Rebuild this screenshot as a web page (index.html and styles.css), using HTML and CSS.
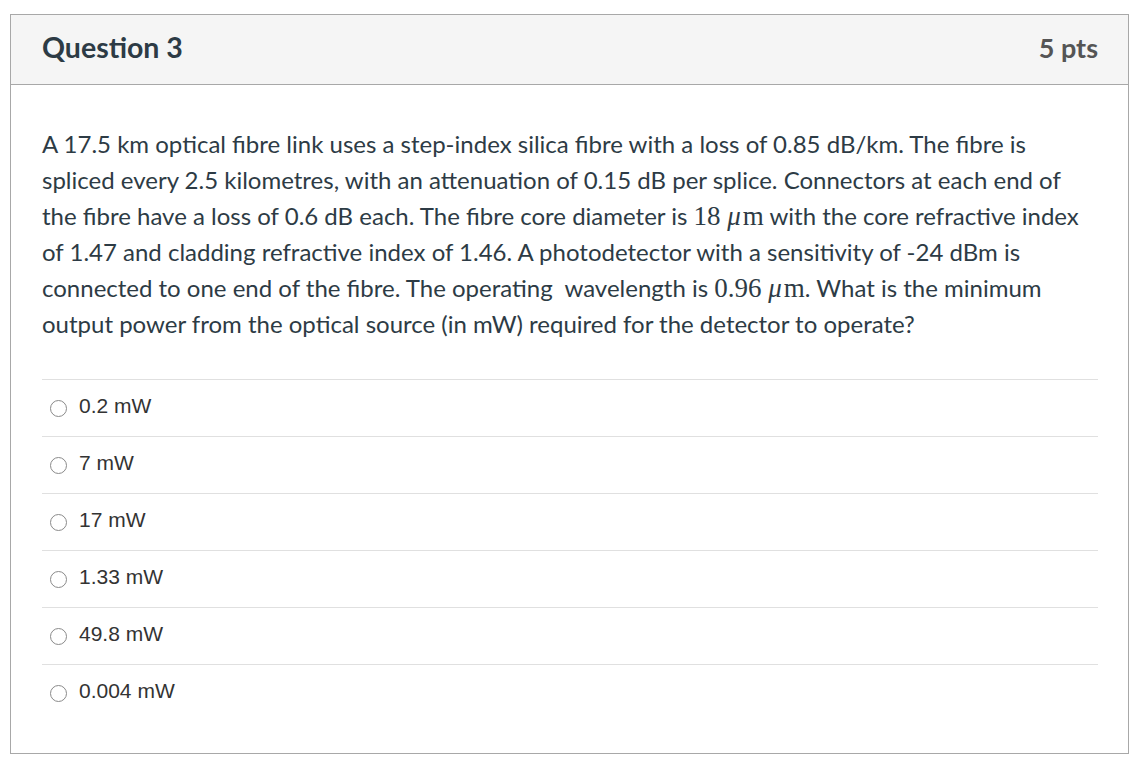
FILE: index.html
```html
<!DOCTYPE html>
<html>
<head>
<meta charset="utf-8">
<link rel="stylesheet" href="styles.css">
</head>
<body>
<div class="question">
  <div class="header">
    <h2 class="title">Question 3</h2>
    <div class="pts">5 pts</div>
  </div>
  <div class="content">
    <p class="text">A 17.5 km optical fibre link uses a step-index silica fibre with a loss of 0.85 dB/km. The fibre is spliced every 2.5 kilometres, with an attenuation of 0.15 dB per splice. Connectors at each end of the fibre have a loss of 0.6 dB each. The fibre core diameter is <span class="math">18&nbsp;<i>μ</i>m</span> with the core refractive index of 1.47 and cladding refractive index of 1.46. A photodetector with a sensitivity of -24 dBm is connected to one end of the fibre. The operating&nbsp; wavelength is <span class="math">0.96&nbsp;<i>μ</i>m</span>. What is the minimum output power from the optical source (in mW) required for the detector to operate?</p>
    <div class="answers">
      <div class="answer"><span class="radio"></span><span class="label">0.2 mW</span></div>
      <div class="answer"><span class="radio"></span><span class="label">7 mW</span></div>
      <div class="answer"><span class="radio"></span><span class="label">17 mW</span></div>
      <div class="answer"><span class="radio"></span><span class="label">1.33 mW</span></div>
      <div class="answer"><span class="radio"></span><span class="label">49.8 mW</span></div>
      <div class="answer"><span class="radio"></span><span class="label">0.004 mW</span></div>
    </div>
  </div>
</div>
</body>
</html>
```
FILE: styles.css
```css
html, body {
  margin: 0;
  padding: 0;
  background: #ffffff;
}
body {
  padding: 14px 10px 0 10px;
  font-family: Lato, "Liberation Sans", sans-serif;
  color: #2d3b45;
}
.question {
  border: 1px solid #a8a8a8;
  box-sizing: border-box;
  height: 740px;
  width: 1119px;
}
.header {
  background: #f5f5f5;
  border-bottom: 1px solid #a8a8a8;
  height: 70px;
  box-sizing: border-box;
  display: flex;
  align-items: center;
  justify-content: space-between;
  padding: 0 30px 5px 31px;
}
.title {
  margin: 0;
  font-size: 28.5px;
  font-weight: 700;
  color: #2d3b45;
}
.pts {
  font-size: 27px;
  font-weight: 700;
  color: #555555;
}
.content {
  padding: 41px 30px 0 31px;
}
.text {
  margin: 0;
  font-size: 24px;
  line-height: 36px;
  color: #2d3b45;
}
.math {
  font-family: "Liberation Serif", "DejaVu Serif", serif;
  font-size: 27px;
  line-height: 1;
  white-space: nowrap;
}
.math i {
  font-style: italic;
  padding-right: 2px;
}
.answers {
  margin-top: 37px;
  border-top: 1px solid #e0e0e0;
}
.answer {
  height: 56px;
  border-bottom: 1px solid #e0e0e0;
  display: flex;
  align-items: center;
  padding-left: 8px;
}
.answers .answer:last-child {
  border-bottom: none;
}
.label {
  font-family: "Liberation Sans", Arial, sans-serif;
  font-size: 21px;
  color: #333333;
  position: relative;
  top: -2px;
}
.radio {
  width: 17px;
  height: 17px;
  border: 1.3px solid #8a8a8a;
  border-radius: 50%;
  box-sizing: border-box;
  margin-right: 12px;
}
```
